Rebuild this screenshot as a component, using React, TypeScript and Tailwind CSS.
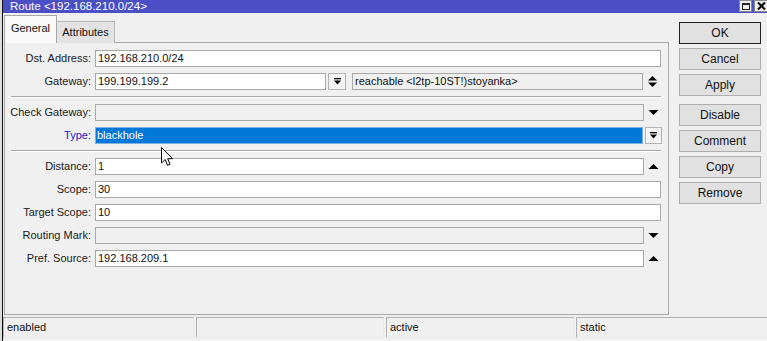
import React from "react";

const DownBar = () => (
  <svg width="9" height="9" viewBox="0 0 9 9">
    <rect x="1" y="1" width="7" height="1.3" fill="#000" />
    <path d="M1 3.5 L8 3.5 L4.5 7.5 Z" fill="#000" />
  </svg>
);

const TriDown = () => (
  <svg width="11" height="7" viewBox="0 0 11 7">
    <path d="M0.5 1 L10.5 1 L5.5 6 Z" fill="#000" />
  </svg>
);

const TriUp = () => (
  <svg width="11" height="7" viewBox="0 0 11 7">
    <path d="M0.5 6 L10.5 6 L5.5 1 Z" fill="#000" />
  </svg>
);

const UpDown = () => (
  <svg width="11" height="13" viewBox="0 0 11 13">
    <path d="M1 5.5 L10 5.5 L5.5 1 Z" fill="#000" />
    <path d="M1 7.5 L10 7.5 L5.5 12 Z" fill="#000" />
  </svg>
);

type FieldProps = {
  label: string;
  value?: string;
  kind?: "full" | "down" | "up";
  disabled?: boolean;
};

const Label = ({ text, blue }: { text: string; blue?: boolean }) => (
  <div className={`w-[87px] shrink-0 text-right pr-[1px] ${blue ? "text-[#1b1bc7]" : "text-[#1a1a1a]"}`}>{text}</div>
);

const Field = ({ label, value = "", kind = "full", disabled }: FieldProps) => (
  <div className="flex items-center h-[17px]">
    <Label text={label} />
    <div
      className={`ml-[3px] h-[17px] border border-[#a9a9a9] pl-[2px] flex items-center text-[#111] ${
        disabled ? "bg-[#f0f0f0]" : "bg-white"
      } ${kind === "full" ? "w-[566px]" : "w-[549px]"}`}
    >
      {value}
    </div>
    {kind !== "full" && (
      <div className="w-[17px] h-[17px] flex items-center justify-center ml-[1px]">
        {kind === "down" ? <TriDown /> : <TriUp />}
      </div>
    )}
  </div>
);

const Sep = () => (
  <div className="ml-[6px] w-[650px] h-[2px] border-t border-[#a8a8a8] border-b border-b-white" />
);

const Btn = ({ text, primary, extra = "" }: { text: string; primary?: boolean; extra?: string }) => (
  <div
    className={`h-[22px] w-[82px] flex items-center justify-center bg-[#e1e1e1] text-[12px] text-[#111] border ${
      primary ? "border-[#222]" : "border-[#adadad]"
    } ${extra}`}
  >
    {text}
  </div>
);

const Status = ({ text, w }: { text: string; w: string }) => (
  <div className={`${w} h-[21px] border border-[#b0b0b0] border-r-[#e8e8e8] border-b-[#e8e8e8] pl-[3px] flex items-center text-[#111]`}>
    {text}
  </div>
);

export default function App() {
  return (
    <div className="w-[767px] h-[341px] overflow-hidden flex bg-[#f0f0f0] font-['Liberation_Sans',Arial,sans-serif] text-[11px] relative">
      <div className="w-[2px] h-full bg-[#dcdcdc] shrink-0" />
      <div className="flex-1 flex flex-col border-l border-[#111]">
        {/* title bar */}
        <div className="h-[13px] bg-[#4b4fc6] flex items-center justify-between shrink-0">
          <div className="text-white text-[11.5px] leading-[13px] pl-[7px] -mt-[1px]">Route &lt;192.168.210.0/24&gt;</div>
          <div className="flex items-start h-[13px] pr-[1px] gap-[2px]">
            <div className="w-[13px] h-[12px] bg-[#ececec] border border-[#8a8a8a] flex items-center justify-center">
              <div className="w-[8px] h-[7px] border border-[#222] border-t-2" />
            </div>
            <div className="w-[14px] h-[12px] bg-[#ececec] border border-[#8a8a8a] flex items-center justify-center">
              <svg width="9" height="8" viewBox="0 0 9 8">
                <path d="M1 0.5 L8 7.5 M8 0.5 L1 7.5" stroke="#000" strokeWidth="2" />
              </svg>
            </div>
          </div>
        </div>

        {/* body */}
        <div className="flex-1 flex flex-col">
          <div className="flex h-[302px]">
            <div className="ml-[1px] w-[665px] flex flex-col pt-[2px]">
              {/* tabs */}
              <div className="flex items-end h-[28px] relative z-10 -mb-[1px]">
                <div className="h-[28px] w-[53px] bg-[#f9f9f9] border border-b-0 border-[#a8a8a8] flex items-center justify-center text-[#111] pb-[2px]">
                  General
                </div>
                <div className="h-[22px] w-[58px] bg-[#e3e3e3] border border-l-0 border-b-0 border-[#b8b8b8] flex items-center justify-center text-[#111]">
                  Attributes
                </div>
              </div>
              {/* panel */}
              <div className="flex-1 border border-[#a8a8a8] pt-[7px] flex flex-col gap-[6px]">
                <Field label="Dst. Address:" value="192.168.210.0/24" />
                <div className="flex items-center h-[17px]">
                  <Label text="Gateway:" />
                  <div className="ml-[3px] w-[231px] h-[17px] border border-[#a9a9a9] bg-white pl-[2px] flex items-center text-[#111]">
                    199.199.199.2
                  </div>
                  <div className="ml-[2px] w-[18px] h-[17px] border border-[#b4b4b4] bg-[#f5f5f5] flex items-center justify-center">
                    <DownBar />
                  </div>
                  <div className="ml-[6px] w-[291px] h-[17px] border border-[#a9a9a9] bg-[#f0f0f0] pl-[2px] flex items-center text-[#111]">
                    reachable &lt;l2tp-10ST!)stoyanka&gt;
                  </div>
                  <div className="w-[18px] h-[17px] flex items-center justify-center">
                    <UpDown />
                  </div>
                </div>
                <Sep />
                <Field label="Check Gateway:" kind="down" disabled />
                <div className="flex items-center h-[17px]">
                  <Label text="Type:" blue />
                  <div className="ml-[3px] w-[548px] h-[17px] border border-[#7fb2e0] bg-[#0078d7] pl-[1px] flex items-center text-white">
                    blackhole
                  </div>
                  <div className="ml-[2px] w-[17px] h-[17px] border border-[#b4b4b4] bg-[#f5f5f5] flex items-center justify-center">
                    <DownBar />
                  </div>
                </div>
                <Sep />
                <Field label="Distance:" value="1" kind="up" />
                <Field label="Scope:" value="30" />
                <Field label="Target Scope:" value="10" />
                <Field label="Routing Mark:" kind="down" disabled />
                <Field label="Pref. Source:" value="192.168.209.1" kind="up" />
              </div>
            </div>
            {/* buttons */}
            <div className="ml-[10px] pt-[9px] flex flex-col gap-[4px]">
              <Btn text="OK" primary />
              <Btn text="Cancel" />
              <Btn text="Apply" />
              <Btn text="Disable" extra="mt-[4px]" />
              <Btn text="Comment" />
              <Btn text="Copy" />
              <Btn text="Remove" />
            </div>
          </div>
          {/* status bar */}
          <div className="mt-[2px] flex gap-[2px]">
            <Status text="enabled" w="w-[191px]" />
            <Status text="" w="w-[188px]" />
            <Status text="active" w="w-[188px]" />
            <Status text="static" w="w-[193px]" />
          </div>
        </div>
      </div>

      {/* mouse cursor */}
      <svg className="absolute left-[161px] top-[147px]" width="13" height="20" viewBox="0 0 13 20">
        <path d="M0.5 0.5 L0.5 16 L4.2 12.5 L6.6 18.3 L9 17.3 L6.7 11.7 L11.5 11.7 Z" fill="#fff" stroke="#000" strokeWidth="1" strokeLinejoin="round" />
      </svg>
    </div>
  );
}
